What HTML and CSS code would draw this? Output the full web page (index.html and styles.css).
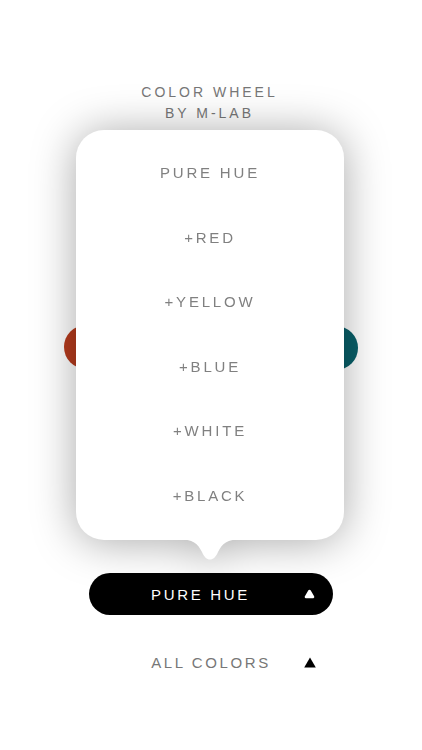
FILE: index.html
```html
<!DOCTYPE html>
<html>
<head>
<meta charset="utf-8">
<link rel="stylesheet" href="styles.css">
</head>
<body>
<div class="page">
  <header class="title">
    <div>COLOR WHEEL</div>
    <div>BY M-LAB</div>
  </header>
  <section class="stage">
    <span class="dot dot-red"></span>
    <span class="dot dot-teal"></span>
  </section>
  <button class="pill">
    <span class="label">PURE HUE</span>
    <svg class="tri" width="11" height="10" viewBox="0 0 11 10"><path d="M5.5 2 L9 8 L2 8 Z" fill="#fff" stroke="#fff" stroke-width="2.6" stroke-linejoin="round"/></svg>
  </button>
  <div class="row">
    <span class="label">ALL COLORS</span>
    <svg class="tri" width="12" height="11" viewBox="0 0 12 11"><path d="M6 0.5 L11.8 10.5 L0.2 10.5 Z" fill="#000"/></svg>
  </div>

  <div class="popup">
    <div class="card">
      <div class="item">PURE HUE</div>
      <div class="item">+RED</div>
      <div class="item">+YELLOW</div>
      <div class="item">+BLUE</div>
      <div class="item">+WHITE</div>
      <div class="item">+BLACK</div>
    </div>
    <svg class="tail" width="64" height="24" viewBox="0 0 64 24"><path d="M0 0 C15 0 20 5 24 13 C28 23 36 23 40 13 C44 5 49 0 64 0 Z" fill="#fff"/></svg>
  </div>
</div>
</body>
</html>
```
FILE: styles.css
```css
* { box-sizing: border-box; }
html, body { margin: 0; padding: 0; background: #fff; }
body { font-family: "Liberation Sans", Arial, sans-serif; }
.page {
  position: relative;
  width: 422px;
  height: 750px;
  overflow: hidden;
  background: #fff;
}
.title {
  padding-top: 82px;
  text-align: center;
  font-size: 14px;
  line-height: 21px;
  letter-spacing: 3px;
  color: #777;
  padding-right: 3px;
}
.stage {
  position: relative;
  height: 449px;
}
.dot {
  position: absolute;
  width: 44px;
  height: 44px;
  border-radius: 50%;
}
.dot-red { background: #b63b1d; left: 64px; top: 201px; }
.dot-teal { background: #09606a; left: 314px; top: 202px; }
.pill {
  display: flex;
  align-items: center;
  width: 244px;
  height: 42px;
  margin: 0 auto;
  padding: 0 18px 0 18px;
  border: none;
  border-radius: 21px;
  background: #000;
  color: #fff;
  font-family: inherit;
  font-size: 15px;
  letter-spacing: 2.7px;
}
.pill .label { flex: 1; text-align: center; }
.pill .tri { margin-left: 10px; }
.row {
  display: flex;
  align-items: center;
  width: 244px;
  height: 24px;
  margin: 35px auto 0;
  padding: 0 17px 0 39px;
  font-size: 15px;
  letter-spacing: 2.6px;
  color: #777;
}
.row .label { flex: 1; text-align: center; }
.row .tri { margin-left: 10px; }
.popup {
  position: absolute;
  left: 76px;
  top: 130px;
  width: 268px;
  filter: drop-shadow(0 2px 22px rgba(0,0,0,0.34));
}
.card {
  height: 410px;
  border-radius: 28px;
  background: #fff;
  padding-top: 11px;
}
.item {
  height: 64.5px;
  line-height: 64.5px;
  text-align: center;
  font-size: 15px;
  letter-spacing: 2.8px;
  color: #808080;
}
.tail {
  display: block;
  margin: -1px auto 0;
}
```
